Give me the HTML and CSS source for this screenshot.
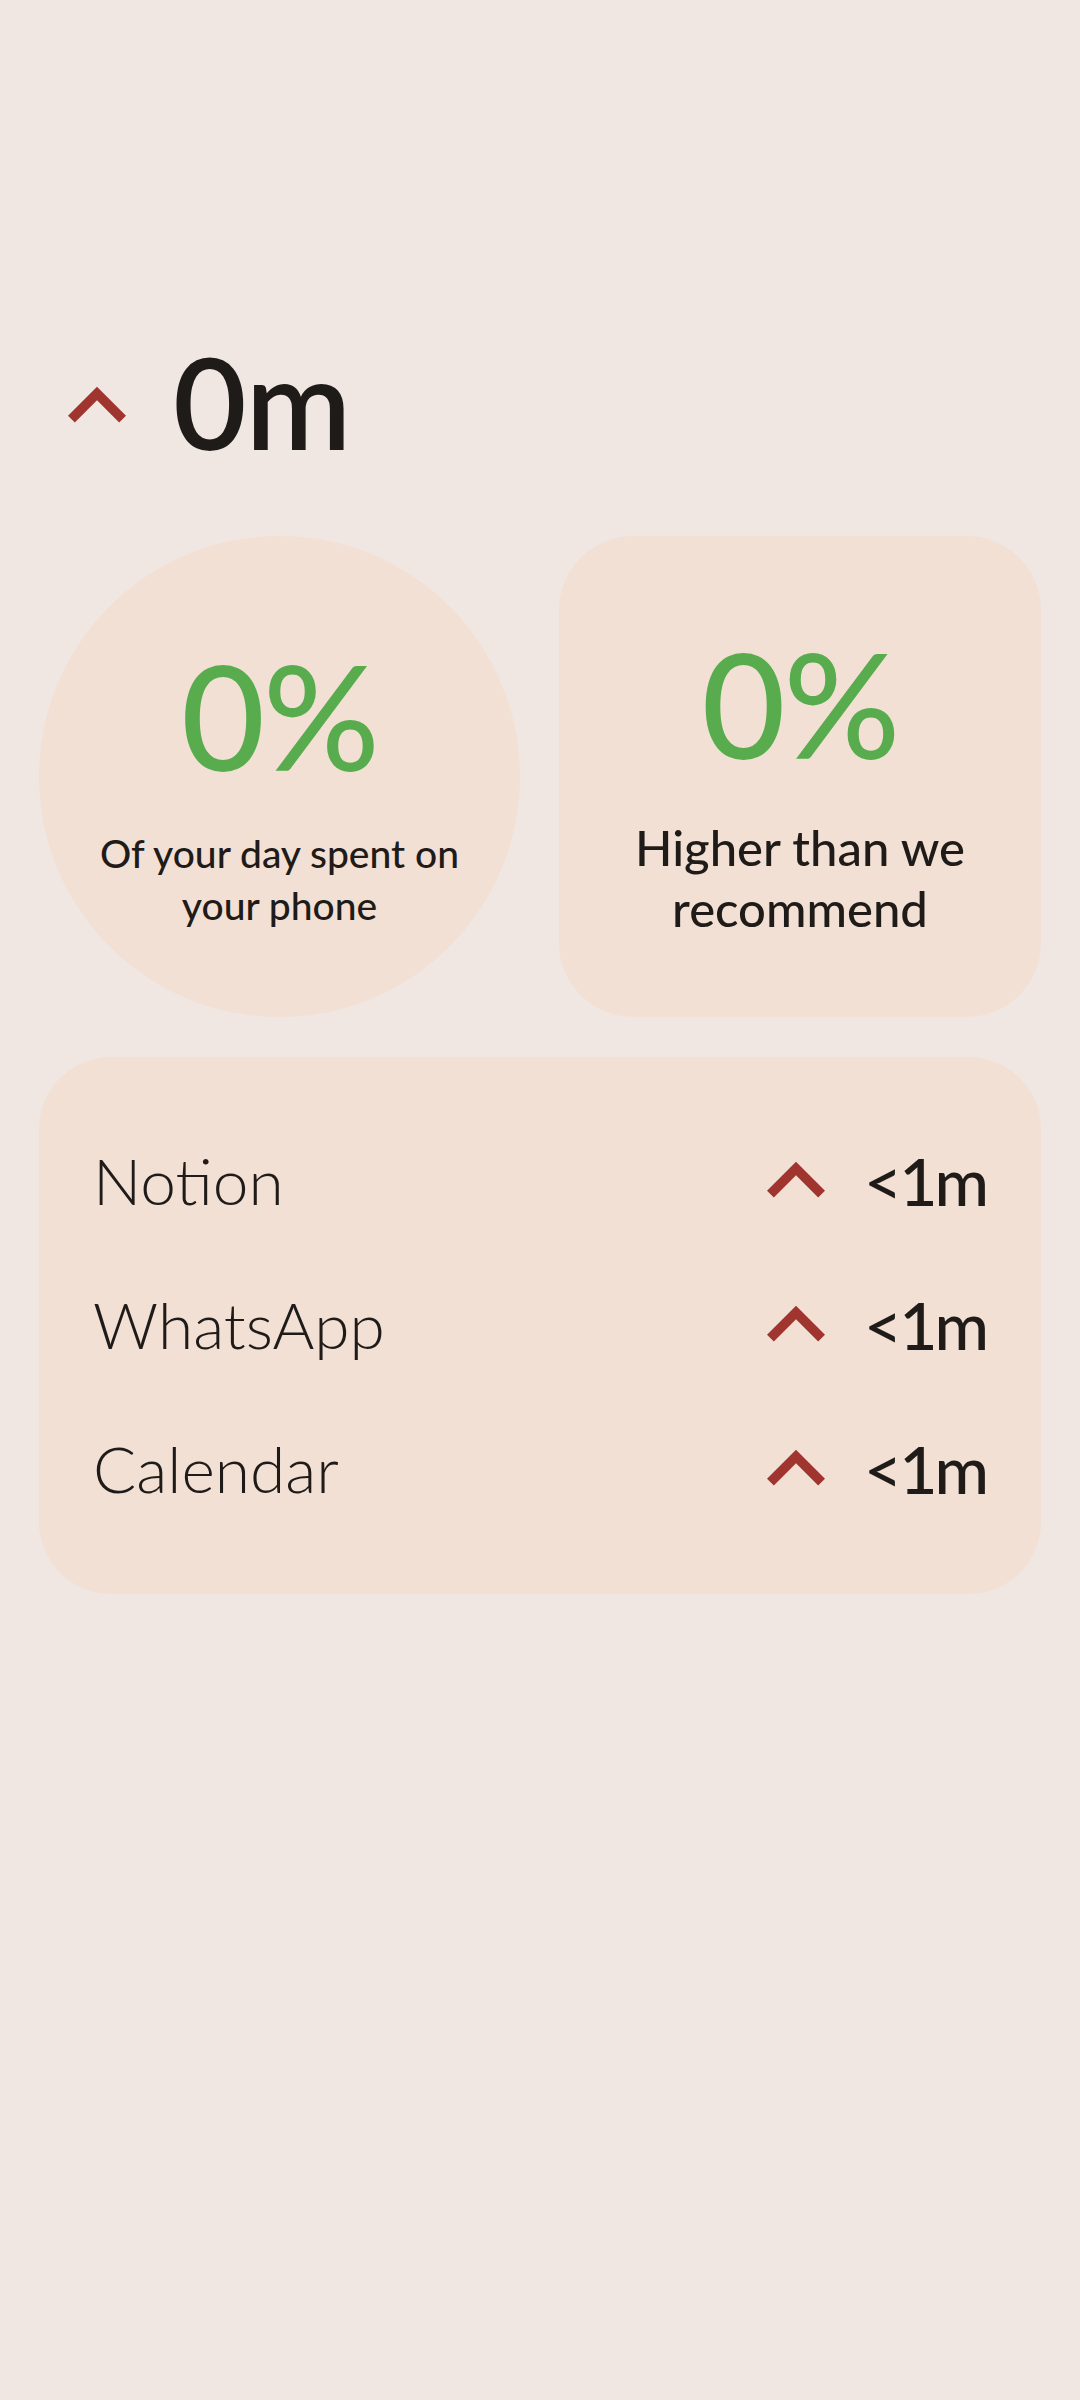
FILE: index.html
```html
<!DOCTYPE html>
<html lang="en">
<head>
<meta charset="utf-8">
<title>Screen time</title>
<link rel="stylesheet" href="styles.css">
</head>
<body>
<main class="page">
  <header class="total">
    <svg class="chev chev-lg" viewBox="0 0 24 24" aria-hidden="true"><path d="M12 8l-6 6 1.41 1.41L12 10.83l4.59 4.58L18 14z"/></svg>
    <span class="total-value">0m</span>
  </header>

  <section class="stats">
    <div class="stat stat-circle">
      <div class="stat-value">0%</div>
      <div class="stat-label">Of your day spent on<br>your phone</div>
    </div>
    <div class="stat stat-square">
      <div class="stat-value">0%</div>
      <div class="stat-label">Higher than we<br>recommend</div>
    </div>
  </section>

  <section class="apps">
    <div class="app-row">
      <span class="app-name">Notion</span>
      <span class="app-time">
        <svg class="chev chev-md" viewBox="0 0 24 24" aria-hidden="true"><path d="M12 8l-6 6 1.41 1.41L12 10.83l4.59 4.58L18 14z"/></svg>
        <span class="app-value">&lt;1m</span>
      </span>
    </div>
    <div class="app-row">
      <span class="app-name">WhatsApp</span>
      <span class="app-time">
        <svg class="chev chev-md" viewBox="0 0 24 24" aria-hidden="true"><path d="M12 8l-6 6 1.41 1.41L12 10.83l4.59 4.58L18 14z"/></svg>
        <span class="app-value">&lt;1m</span>
      </span>
    </div>
    <div class="app-row">
      <span class="app-name">Calendar</span>
      <span class="app-time">
        <svg class="chev chev-md" viewBox="0 0 24 24" aria-hidden="true"><path d="M12 8l-6 6 1.41 1.41L12 10.83l4.59 4.58L18 14z"/></svg>
        <span class="app-value">&lt;1m</span>
      </span>
    </div>
  </section>
</main>
</body>
</html>
```
FILE: styles.css
```css
html, body {
  margin: 0;
  padding: 0;
}
body {
  background: #F0E7E2;
  color: #1F1B18;
  font-family: Lato, "Noto Sans", sans-serif;
  width: 1080px;
  height: 2400px;
  overflow: hidden;
}
.page {
  padding: 348px 39px 0 39px;
}
.chev {
  display: block;
  fill: #A0352F;
  flex: none;
}
.chev-lg {
  width: 116px;
  height: 116px;
}
.chev-md {
  width: 116px;
  height: 116px;
}
.total {
  display: flex;
  align-items: center;
  height: 116px;
  gap: 18px;
}
.total-value {
  font-size: 127px;
  font-weight: 600;
  line-height: 1;
  letter-spacing: -1px;
  margin-top: -10px;
}
.stats {
  display: flex;
  gap: 39px;
  margin-top: 72px;
}
.stat {
  background: #F2E0D5;
  height: 481px;
  display: flex;
  flex-direction: column;
  align-items: center;
  text-align: center;
  box-sizing: border-box;
}
.stat-circle {
  width: 481px;
  border-radius: 50%;
  padding-top: 107px;
}
.stat-square {
  flex: 1;
  border-radius: 74px;
  padding-top: 95px;
}
.stat-value {
  color: #58AC4E;
  font-size: 145px;
  font-weight: 500;
  line-height: 1;
  letter-spacing: -2px;
}
.stat-circle .stat-label {
  margin-top: 39px;
  font-size: 39px;
  line-height: 52px;
  font-weight: 500;
}
.stat-square .stat-label {
  margin-top: 41px;
  font-size: 49px;
  line-height: 61px;
  font-weight: 500;
}
.apps {
  margin-top: 40px;
  background: #F2E0D5;
  border-radius: 72px;
  padding: 52px 55px 53px 54px;
}
.app-row {
  display: flex;
  align-items: center;
  justify-content: space-between;
  height: 144px;
}
.app-name {
  font-size: 64px;
  font-weight: 300;
  line-height: 1;
}
.app-time {
  display: flex;
  align-items: center;
  gap: 10px;
}
.app-value {
  font-size: 66px;
  font-weight: 500;
  line-height: 1;
  letter-spacing: -3px;
}
```
